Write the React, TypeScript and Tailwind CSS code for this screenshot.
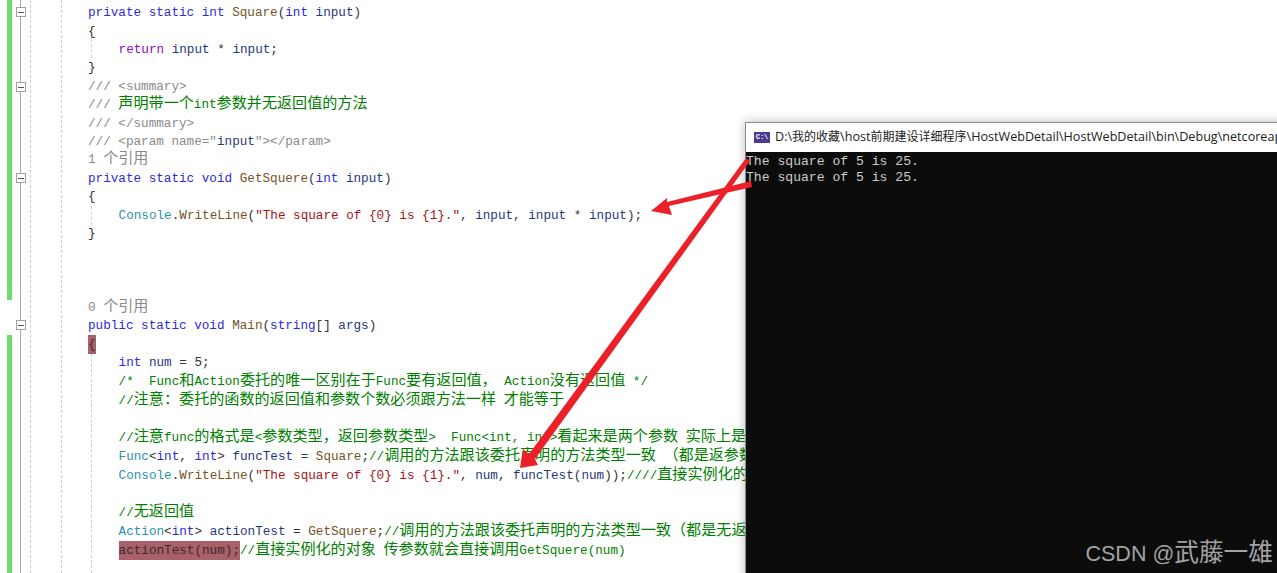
import React from "react";

const KW = "text-[#2b2bd8]";
const TY = "text-[#2b91af]";
const ME = "text-[#74531f]";
const ST = "text-[#a31515]";
const CO = "text-[#008000]";
const GR = "text-[#8a8a8a]";
const ID = "text-[#1f377f]";
const PL = "text-[#333333]";

type Seg = [string, string];

// cjk glyphs need a bigger size so that one glyph is two code columns wide
const Mixed = ({ text }: { text: string }) => (
  <>
    {text.split(/([\u3000-\u9fff\uff00-\uffef]+)/).map((part, i) =>
      i % 2 === 1 ? (
        <span key={i} className="text-[15.1px] leading-none">
          {part}
        </span>
      ) : (
        part
      ),
    )}
  </>
);

const rows: { segs: Seg[]; indent?: boolean }[] = [
  { segs: [[GR, "1 个引用"]] },
  {
    segs: [
      [KW, "private static int "],
      [ME, "Square"],
      [PL, "("],
      [KW, "int "],
      [ID, "input"],
      [PL, ")"],
    ],
  },
  { segs: [[PL, "{"]] },
  {
    indent: true,
    segs: [
      ["text-[#8f08c4]", "return "],
      [ID, "input"],
      [PL, " * "],
      [ID, "input"],
      [PL, ";"],
    ],
  },
  { segs: [[PL, "}"]] },
  { segs: [[GR, "/// <summary>"]] },
  {
    segs: [
      [GR, "/// "],
      [CO, "声明带一个int参数并无返回值的方法"],
    ],
  },
  { segs: [[GR, "/// </summary>"]] },
  {
    segs: [
      [GR, '/// <param name="'],
      [ID, "input"],
      [GR, '"></param>'],
    ],
  },
  { segs: [[GR, "1 个引用"]] },
  {
    segs: [
      [KW, "private static void "],
      [ME, "GetSquere"],
      [PL, "("],
      [KW, "int "],
      [ID, "input"],
      [PL, ")"],
    ],
  },
  { segs: [[PL, "{"]] },
  {
    indent: true,
    segs: [
      [TY, "Console"],
      [PL, "."],
      [ME, "WriteLine"],
      [PL, "("],
      [ST, '"The square of {0} is {1}."'],
      [PL, ", "],
      [ID, "input"],
      [PL, ", "],
      [ID, "input"],
      [PL, " * "],
      [ID, "input"],
      [PL, ");"],
    ],
  },
  { segs: [[PL, "}"]] },
  { segs: [] },
  { segs: [] },
  { segs: [] },
  { segs: [[GR, "0 个引用"]] },
  {
    segs: [
      [KW, "public static void "],
      [ME, "Main"],
      [PL, "("],
      [KW, "string"],
      [PL, "[] "],
      [ID, "args"],
      [PL, ")"],
    ],
  },
  { segs: [["bg-[#a9606a] py-[2px] text-[#333333]", "{"]] },
  {
    indent: true,
    segs: [
      [KW, "int "],
      [ID, "num"],
      [PL, " = 5;"],
    ],
  },
  {
    indent: true,
    segs: [[CO, "/*  Func和Action委托的唯一区别在于Func要有返回值， Action没有返回值 */"]],
  },
  {
    indent: true,
    segs: [[CO, "//注意：委托的函数的返回值和参数个数必须跟方法一样 才能等于"]],
  },
  { segs: [] },
  {
    indent: true,
    segs: [
      [
        CO,
        "//注意func的格式是<参数类型，返回参数类型>  Func<int, int>看起来是两个参数 实际上是一个参数",
      ],
    ],
  },
  {
    indent: true,
    segs: [
      [TY, "Func"],
      [PL, "<"],
      [KW, "int"],
      [PL, ", "],
      [KW, "int"],
      [PL, "> "],
      [ID, "funcTest"],
      [PL, " = "],
      [ME, "Square"],
      [PL, ";"],
      [CO, "//调用的方法跟该委托声明的方法类型一致 （都是返参数）"],
    ],
  },
  {
    indent: true,
    segs: [
      [TY, "Console"],
      [PL, "."],
      [ME, "WriteLine"],
      [PL, "("],
      [ST, '"The square of {0} is {1}."'],
      [PL, ", "],
      [ID, "num"],
      [PL, ", "],
      [ID, "funcTest"],
      [PL, "("],
      [ID, "num"],
      [PL, "));"],
      [CO, "////直接实例化的对象"],
    ],
  },
  { segs: [] },
  { indent: true, segs: [[CO, "//无返回值"]] },
  {
    indent: true,
    segs: [
      [TY, "Action"],
      [PL, "<"],
      [KW, "int"],
      [PL, "> "],
      [ID, "actionTest"],
      [PL, " = "],
      [ME, "GetSquere"],
      [PL, ";"],
      [CO, "//调用的方法跟该委托声明的方法类型一致（都是无返回值）"],
    ],
  },
  {
    indent: true,
    segs: [
      ["bg-[#a9606a] py-[2px] text-[#3a2a2a]", "actionTest(num);"],
      [CO, "//直接实例化的对象 传参数就会直接调用GetSquere(num)"],
    ],
  },
];

const FoldBox = () => (
  <div className="absolute left-[16px] flex h-[10px] w-[10px] items-center justify-center border border-[#a0a0a0] bg-white">
    <div className="h-px w-[6px] bg-[#555555]" />
  </div>
);

const Arrows = () => (
  <svg className="absolute inset-0" width="1277" height="573" viewBox="0 0 1277 573">
    <polygon
      points="751,181 752,187 669,206 672,215 651,211 667,198 667,202"
      fill="#ec2029"
    />
    <polygon
      points="746,158 750,161 535,459 538,465 520,468 523,449 529,454"
      fill="#ec2029"
    />
  </svg>
);

export default function App() {
  return (
    <div className="relative h-[573px] w-[1277px] overflow-hidden bg-white font-['Liberation_Mono','Noto_Sans_CJK_SC',monospace] text-[12.65px]">
      <div className="flex h-full">
        {/* change bar and outlining margin */}
        <div className="w-[7px] shrink-0" />
        <div className="flex w-[5px] shrink-0 flex-col">
          <div className="h-[300px] bg-[#6fdc6f]" />
          <div className="h-[35px]" />
          <div className="flex-1 bg-[#6fdc6f]" />
        </div>
        <div className="relative w-[18px] shrink-0">
          <div className="absolute left-[8px] top-0 h-full w-px bg-[#a8a8a8]" />
        </div>
        <div className="w-[31px] shrink-0 border-l border-dashed border-[#cfcfcf]" />
        <div className="w-[27px] shrink-0 border-l border-dashed border-[#cfcfcf]" />

        {/* code */}
        <div className="relative -mt-[13.8px] min-w-0 flex-1 whitespace-pre">
          {rows.map((row, i) => (
            <div
              key={i}
              className={
                i < 19
                  ? "flex h-[18.4px] items-center"
                  : "flex h-[18.75px] items-center"
              }
            >
              <span className={row.indent ? "pl-[30.6px]" : ""}>
                {row.segs.map(([color, text], j) => (
                  <span key={j} className={color}>
                    <Mixed text={text} />
                  </span>
                ))}
              </span>
            </div>
          ))}
        </div>
      </div>

      {/* brace guides */}
      <div className="absolute left-[91px] top-[39px] h-[19px] border-l border-dashed border-[#cfcfcf]" />
      <div className="absolute left-[91px] top-[206px] h-[19px] border-l border-dashed border-[#cfcfcf]" />
      <div className="absolute left-[91px] top-[354px] h-[219px] border-l border-dashed border-[#cfcfcf]" />

      <div className="absolute left-0 top-[7px]">
        <FoldBox />
      </div>
      <div className="absolute left-0 top-[82px]">
        <FoldBox />
      </div>
      <div className="absolute left-0 top-[173px]">
        <FoldBox />
      </div>
      <div className="absolute left-0 top-[320px]">
        <FoldBox />
      </div>

      {/* console window */}
      <div className="absolute left-[745px] top-[122px] flex h-[470px] w-[560px] flex-col border-l border-t border-[#8a8a8a] shadow-[0_0_10px_rgba(0,0,0,0.28)]">
        <div className="flex h-[29px] shrink-0 items-center gap-[5px] bg-white pl-[8px] font-['Open_Sans','Noto_Sans_CJK_SC',sans-serif] text-[12.6px] text-[#222222]">
          <div className="flex h-[11px] w-[16px] shrink-0 items-center justify-center bg-[#4b3b8f] font-['Liberation_Mono',monospace] text-[7px] font-bold leading-none text-white">
            C:\
          </div>
          <span className="whitespace-nowrap">
            D:\<span className="text-[12px]">我的收藏</span>\host
            <span className="text-[12px]">前期建设详细程序</span>
            \HostWebDetail\HostWebDetail\bin\Debug\netcoreapp3.1\HostWebDetail.exe
          </span>
        </div>
        <div className="relative flex-1 bg-[#0c0c0c] pt-[2px] text-[13.1px] leading-[16px] text-[#cccccc]">
          <div>The square of 5 is 25.</div>
          <div>The square of 5 is 25.</div>
        </div>
      </div>

      <Arrows />

      <div className="absolute bottom-[7px] right-[4px] flex items-baseline font-['Liberation_Sans','Noto_Sans_CJK_SC',sans-serif] text-[21.5px] leading-none text-[#a3a3a3]">
        <span className="whitespace-pre">CSDN @</span>
        <span className="text-[24.7px]">武藤一雄</span>
      </div>
    </div>
  );
}
